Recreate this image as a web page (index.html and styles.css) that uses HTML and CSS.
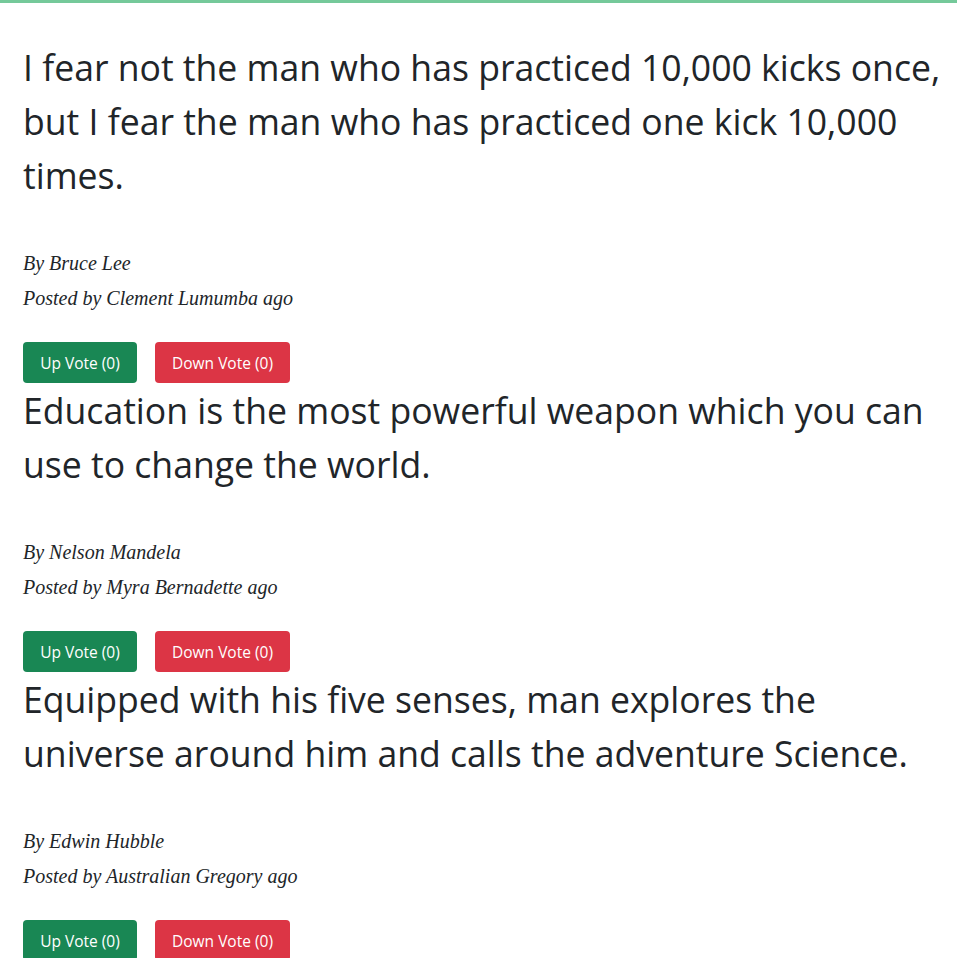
FILE: index.html
```html
<!DOCTYPE html>
<html lang="en">
<head>
<meta charset="utf-8">
<title>Quotes</title>
<link rel="stylesheet" href="styles.css">
</head>
<body>
<div class="page">
  <div class="quote">
    <p class="quote-text">I fear not the man who has practiced 10,000 kicks once, but I fear the man who has practiced one kick 10,000 times.</p>
    <p class="meta">By Bruce Lee</p>
    <p class="meta">Posted by Clement Lumumba ago</p>
    <div class="actions">
      <button class="btn btn-up">Up Vote (0)</button>
      <button class="btn btn-down">Down Vote (0)</button>
    </div>
  </div>
  <div class="quote">
    <p class="quote-text">Education is the most powerful weapon which you can use to change the world.</p>
    <p class="meta">By Nelson Mandela</p>
    <p class="meta">Posted by Myra Bernadette ago</p>
    <div class="actions">
      <button class="btn btn-up">Up Vote (0)</button>
      <button class="btn btn-down">Down Vote (0)</button>
    </div>
  </div>
  <div class="quote">
    <p class="quote-text">Equipped with his five senses, man explores the universe around him and calls the adventure Science.</p>
    <p class="meta">By Edwin Hubble</p>
    <p class="meta">Posted by Australian Gregory ago</p>
    <div class="actions">
      <button class="btn btn-up">Up Vote (0)</button>
      <button class="btn btn-down">Down Vote (0)</button>
    </div>
  </div>
</div>
</body>
</html>
```
FILE: styles.css
```css
html, body {
  margin: 0;
  padding: 0;
  background: #ffffff;
}
body {
  border-top: 3px solid #75c99a;
  font-family: "Open Sans", "Liberation Sans", sans-serif;
  color: #212529;
}
.page {
  padding: 37px 12px 0 23px;
}
.quote-text {
  margin: 0 0 44px;
  font-size: 35.6px;
  line-height: 54px;
  font-weight: 400;
}
.meta {
  margin: 0;
  font-family: "Liberation Serif", serif;
  font-style: italic;
  font-size: 20px;
  line-height: 35px;
}
.actions {
  display: flex;
  gap: 18px;
  margin-top: 26px;
}
.btn {
  font-family: "Open Sans", "Liberation Sans", sans-serif;
  font-size: 15.5px;
  height: 41px;
  padding: 0 12px;
  border: 0;
  border-radius: 4px;
  color: #ffffff;
  cursor: pointer;
}
.btn-up {
  background: #198754;
  width: 114px;
}
.btn-down {
  background: #dc3545;
  width: 135px;
}
```
